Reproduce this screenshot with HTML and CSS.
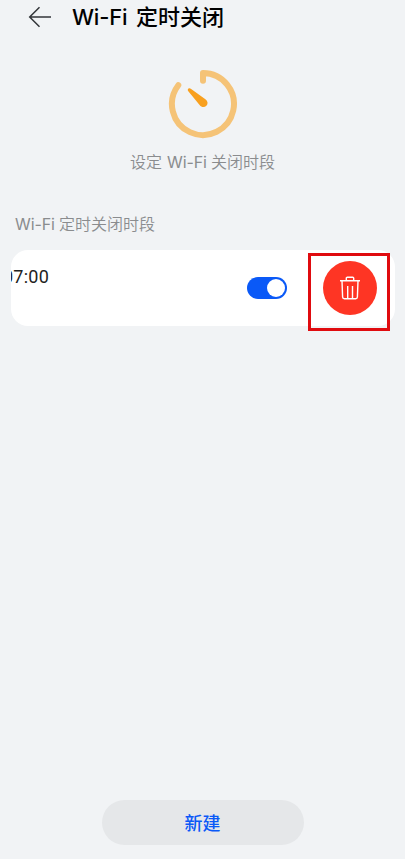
FILE: index.html
```html
<!DOCTYPE html>
<html lang="zh-CN">
<head>
<meta charset="utf-8">
<meta name="viewport" content="width=device-width, initial-scale=1">
<title>Wi-Fi 定时关闭</title>
<link rel="stylesheet" href="styles.css">
</head>
<body>
<div class="screen">
  <header class="header">
    <svg class="back" width="24" height="22" viewBox="0 0 24 22" fill="none" stroke="#33363a" stroke-width="1.5"><path d="M11.5 1.2 1.7 11l9.8 9.8M1.7 11H23"/></svg>
    <h1 class="title"><span class="title-latin">Wi-Fi</span><span>定时关闭</span></h1>
  </header>
  <section class="hero">
    <svg width="70" height="70" viewBox="0 0 70 70" fill="none">
      <path d="M35 11.8V4a31 31 0 1 1-24.7 12.2" stroke="#f5c377" stroke-width="6" stroke-linecap="round" stroke-linejoin="round"/>
      <path d="M20.3 19.7c.7-.7 1.6-.6 2.5 0L37.4 30.3c2.5 1.9 2.9 4.6 1 6.5-2 2-4.9 1.7-6.8-.7L20.3 22.2c-.7-.9-.7-1.8 0-2.5Z" fill="#f8a01f"/>
    </svg>
    <p class="caption"><span>设定</span><span class="latin">Wi-Fi</span><span>关闭时段</span></p>
  </section>
  <h2 class="label"><span class="latin">Wi-Fi</span><span>定时关闭时段</span></h2>
  <section class="card">
    <div class="row">
      <div class="time">07:00</div>
      <div class="toggle"><span class="knob"></span></div>
    </div>
    <div class="highlight">
      <button class="delete" aria-label="删除">
        <svg width="20" height="24" viewBox="0 0 20 24" fill="none" stroke="#fff" stroke-width="1.4" stroke-linejoin="round"><path d="M0 4.8h20M6.3 4.5V2.3q0-1 1-1h5.4q1 0 1 1v2.2M2 5l.6 16q.1 1.7 1.7 1.7h11.4q1.6 0 1.7-1.7L18 5M7.7 10v12M12.5 10v12"/></svg>
      </button>
    </div>
  </section>
  <footer class="footer"><button class="create">新建</button></footer>
</div>
</body>
</html>
```
FILE: styles.css
```css
* { box-sizing: border-box; }
body {
  margin: 0;
  background: #f1f3f5;
  color: #000;
  font-family: "Noto Sans CJK SC", sans-serif;
}
h1, h2, p { margin: 0; }
button { border: 0; padding: 0; font: inherit; }
svg { display: block; }
.screen {
  height: 859px;
  display: flex;
  flex-direction: column;
  overflow: hidden;
}
.header {
  height: 34px;
  flex: none;
  display: flex;
  align-items: center;
  padding-left: 28px;
  gap: 20px;
}
.title {
  display: flex;
  gap: 8px;
  font-size: 22px;
  line-height: 31px;
  height: 34px;
  font-weight: 500;
  white-space: nowrap;
}
.title-latin {
  width: 56px;
  font-family: Inter, sans-serif;
  line-height: 35px;
  letter-spacing: -0.2px;
}
.hero {
  display: flex;
  flex-direction: column;
  align-items: center;
  padding-top: 35px;
}
.caption, .label {
  display: flex;
  gap: 5px;
  height: 24px;
  color: #8a8c8e;
  font-size: 16px;
  line-height: 22px;
  font-weight: 350;
  white-space: nowrap;
}
.caption { margin-top: 11px; }
.label { margin: 38px 0 0 15px; }
.latin {
  width: 39px;
  font-family: Inter, sans-serif;
  font-weight: 400;
  line-height: 24px;
  letter-spacing: -0.1px;
}
.card {
  height: 76px;
  margin: 14px 10px 0 11px;
  display: flex;
  background: #fff;
  border-radius: 17px;
}
.row {
  width: 297px;
  display: flex;
  justify-content: space-between;
  padding-right: 21px;
  overflow: hidden;
  border-radius: 17px 0 0 17px;
}
.time {
  margin: 14px 0 0 -8px;
  color: #222;
  font: 18px/25px Roboto, sans-serif;
  letter-spacing: 0.25px;
}
.toggle {
  width: 40px;
  height: 22px;
  margin-top: 27px;
  padding: 2px;
  display: flex;
  justify-content: flex-end;
  border-radius: 11px;
  background: #0a59f7;
}
.knob {
  width: 18px;
  height: 18px;
  border-radius: 50%;
  background: #fff;
}
.highlight {
  width: 82px;
  height: 78px;
  flex: none;
  margin-top: 3px;
  padding: 5px 0 0 12px;
  border: 3px solid #e00b0f;
}
.delete {
  width: 54px;
  height: 54px;
  display: flex;
  align-items: center;
  justify-content: center;
  border-radius: 50%;
  background: #fe3524;
}
.footer {
  margin-top: auto;
  padding-bottom: 14px;
  display: flex;
  justify-content: center;
}
.create {
  width: 202px;
  height: 45px;
  padding-bottom: 2px;
  border-radius: 23px;
  background: #e5e7e9;
  color: #0a59f7;
  font-size: 18px;
  font-weight: 500;
}
```
